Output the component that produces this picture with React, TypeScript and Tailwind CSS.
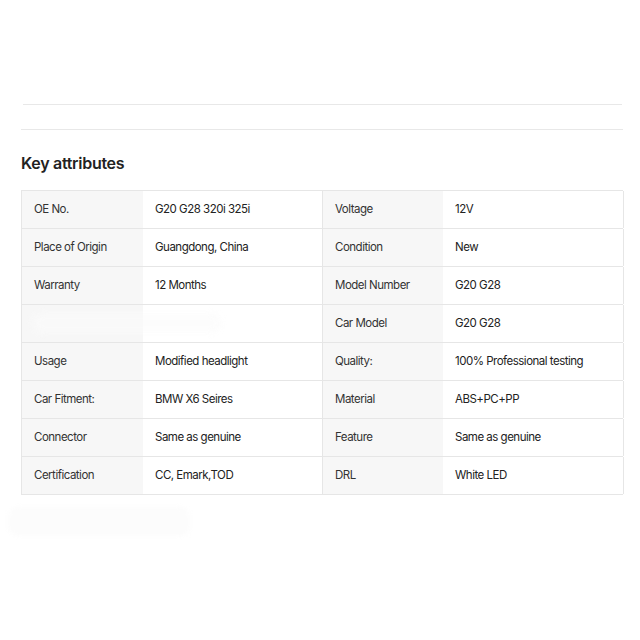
import React from "react";

const rows: [string, string, string, string][] = [
  ["OE No.", "G20 G28 320i 325i", "Voltage", "12V"],
  ["Place of Origin", "Guangdong, China", "Condition", "New"],
  ["Warranty", "12 Months", "Model Number", "G20 G28"],
  ["", "", "Car Model", "G20 G28"],
  ["Usage", "Modified headlight", "Quality:", "100% Professional testing"],
  ["Car Fitment:", "BMW X6 Seires", "Material", "ABS+PC+PP"],
  ["Connector", "Same as genuine", "Feature", "Same as genuine"],
  ["Certification", "CC, Emark,TOD", "DRL", "White LED"],
];

export default function App() {
  return (
    <div
      className="relative w-[640px] h-[640px] bg-white text-[#222] overflow-hidden"
      style={{ fontFamily: "Inter, 'Liberation Sans', sans-serif" }}
    >
      <div className="pt-[104px] pl-[21px]">
        <div className="ml-[2px] w-[599px] h-px bg-[#e8e8e8]" />
        <div className="mt-[24px] w-[602px] h-px bg-[#e8e8e8]" />
        <h2 className="mt-[23px] text-[16px] leading-[20px] font-semibold tracking-[-0.3px] text-[#222]">
          Key attributes
        </h2>
        <div className="mt-[17px] w-[602px] border-t border-l border-[#e6e6e6]">
          {rows.map((r, i) => (
            <div
              key={i}
              className="relative grid grid-cols-[121px_180px_120px_181px] h-[38px] border-b border-[#e6e6e6] text-[11.5px] tracking-[-0.5px]"
            >
              <div className="bg-[#f7f7f7] flex items-center pl-3 text-[#333]">{r[0]}</div>
              <div className="flex items-center pl-3 border-r border-[#e6e6e6]">{r[1]}</div>
              <div className="bg-[#f7f7f7] flex items-center pl-3 text-[#333]">{r[2]}</div>
              <div className="flex items-center pl-3 border-r border-[#e6e6e6]">{r[3]}</div>
              {i === 3 && (
                <div className="absolute left-[10px] top-[8px] w-[190px] h-[20px] rounded-full bg-[#fbfbfb] blur-[3px] opacity-60" />
              )}
            </div>
          ))}
        </div>
      </div>
      <div className="absolute left-[8px] top-[507px] w-[182px] h-[29px] rounded-[10px] bg-[#fcfcfc] blur-[2px]" />
    </div>
  );
}
